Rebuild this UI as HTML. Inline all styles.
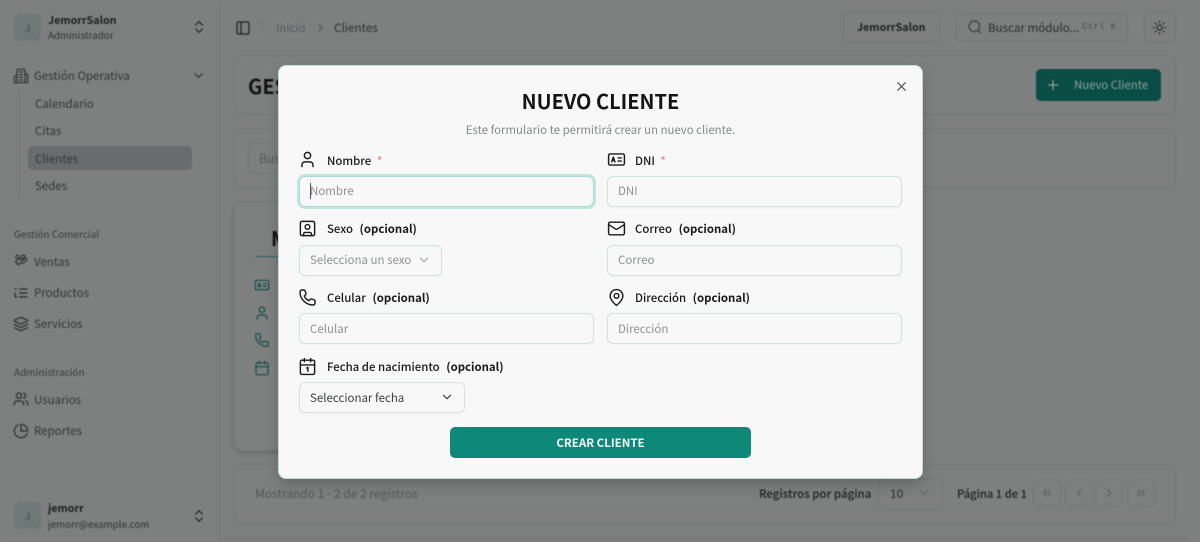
<!DOCTYPE html>
<html lang="es"><head><meta charset="utf-8"><title>Nuevo Cliente</title>
<style>
*{box-sizing:border-box}
html,body{margin:0;padding:0;width:1200px;height:542px;overflow:hidden;background:#7e7f7f}
body{font-family:"Noto Sans CJK SC","Liberation Sans",sans-serif;position:relative}
#bg{position:absolute;inset:0;filter:blur(.45px);background:#7e7f7f}
.t{position:absolute;white-space:nowrap;line-height:20px;height:20px}
.b{position:absolute;border:1px solid #6f7978;border-radius:8px}
svg{position:absolute;fill:none;stroke:currentColor;stroke-width:1.800;stroke-linecap:round;stroke-linejoin:round}
.s{font-size:11.500px;color:#333737}
.g{font-size:10px;color:#383c3c}
.av{position:absolute;left:14px;width:27px;height:27px;border-radius:7px;background:#6f7878;color:#3f4545;font-size:10px;text-align:center;line-height:27px}
#m{position:absolute;left:278px;top:65px;width:645px;height:414px;background:#f8f8f8;border:1px solid #bcdcd6;border-radius:8px;box-shadow:0 6px 14px rgba(0,0,0,.18);color:#1a1a1a}
.l{font-size:11.400px;font-weight:500;color:#191919}
.l b{font-weight:700;margin-left:4px}
.l i{font-style:normal;color:#fb7f86;margin-left:3px}
.i{position:absolute;height:30.500px;border:1px solid #cfe4df;border-radius:6px;box-shadow:0 1px 2px rgba(0,0,0,.04);font-size:11.500px;color:#8f9392;line-height:29px;padding-left:10px;white-space:nowrap}
.i.u{line-height:30px}
</style></head><body>
<div id="bg">
<div style="position:absolute;left:219px;top:0;width:1px;height:542px;background:#6f7978"></div>
<div style="position:absolute;left:220px;top:538px;width:968px;height:1px;background:#727a79"></div>

<div class="av" style="top:14px">J</div>
<div class="t" style="left:48px;top:11px;font-size:10.700px;font-weight:700;color:#1d1f1f">JemorrSalon</div>
<div class="t" style="left:48px;top:25px;font-size:9.800px;color:#2e3232">Administrador</div>
<svg style="left:191px;top:19px;color:#222" width="16" height="16" viewBox="0 0 24 24"><path d="m7 15 5 5 5-5M7 9l5-5 5 5"/></svg>

<svg style="left:13px;top:68px;color:#2d3131" width="16" height="16" viewBox="0 0 24 24" stroke-width="1.700"><rect x="6" y="2" width="12" height="20" rx="2"/><path d="M6 12H4a2 2 0 0 0-2 2v6a2 2 0 0 0 2 2h2M18 9h2a2 2 0 0 1 2 2v9a2 2 0 0 1-2 2h-2M10 6h4M10 10h4M10 14h4M10 18h4"/></svg>
<div class="t s" style="left:34px;top:66px">Gestión Operativa</div>
<svg style="left:191px;top:68px;color:#2a2d2d" width="15" height="15" viewBox="0 0 24 24"><path d="m6 9 6 6 6-6"/></svg>
<div style="position:absolute;left:19px;top:89px;width:1px;height:110px;background:#6f7978"></div>
<div class="t s" style="left:35px;top:94px">Calendario</div>
<div class="t s" style="left:35px;top:121px">Citas</div>
<div style="position:absolute;left:28px;top:146px;width:164px;height:24px;border-radius:5px;background:#686c6c"></div>
<div class="t s" style="left:35px;top:149px">Clientes</div>
<div class="t s" style="left:35px;top:176px">Sedes</div>

<div class="t g" style="left:14px;top:224px">Gestión Comercial</div>
<svg style="left:14px;top:254px;color:#2a2d2d" width="14" height="14" viewBox="0 0 24 24"><path d="M11 12h2a2 2 0 1 0 0-4h-3c-.6 0-1.100.2-1.400.6L3 14"/><path d="m7 18 1.600-1.400c.3-.4.8-.6 1.400-.6h4c1.100 0 2.100-.4 2.800-1.200l4.600-4.400a2 2 0 0 0-2.750-2.910l-4.200 3.900"/><path d="m2 13 6 6"/><circle cx="16" cy="5" r="3"/><circle cx="6" cy="5" r="3"/></svg>
<div class="t s" style="left:34px;top:252px">Ventas</div>
<svg style="left:13px;top:285px;color:#2a2d2d" width="16" height="16" viewBox="0 0 24 24"><path d="M10 6h11M10 12h11M10 18h11M3 6h2M3 12v4a2 2 0 0 0 2 2h1"/></svg>
<div class="t s" style="left:34px;top:283px">Productos</div>
<svg style="left:13px;top:316px;color:#2a2d2d" width="16" height="16" viewBox="0 0 24 24"><path d="m12.800 2.200a2 2 0 0 0-1.600 0L2.600 6.100a1 1 0 0 0 0 1.800l8.600 3.900a2 2 0 0 0 1.600 0l8.600-3.900a1 1 0 0 0 0-1.800z"/><path d="m22 17.600-9.200 4.200a2 2 0 0 1-1.600 0L2 17.600M22 12.600l-9.200 4.200a2 2 0 0 1-1.600 0L2 12.600"/></svg>
<div class="t s" style="left:34px;top:314px">Servicios</div>

<div class="t g" style="left:14px;top:362px">Administración</div>
<svg style="left:13px;top:391px;color:#2a2d2d" width="16" height="16" viewBox="0 0 24 24"><path d="M16 21v-2a4 4 0 0 0-4-4H6a4 4 0 0 0-4 4v2"/><circle cx="9" cy="7" r="4"/><path d="M22 21v-2a4 4 0 0 0-3-3.870M16 3.130a4 4 0 0 1 0 7.750"/></svg>
<div class="t s" style="left:34px;top:390px">Usuarios</div>
<svg style="left:13px;top:423px;color:#2a2d2d" width="16" height="16" viewBox="0 0 24 24"><path d="M21.210 15.890A10 10 0 1 1 8 2.830"/><path d="M22 12A10 10 0 0 0 12 2v10z"/></svg>
<div class="t s" style="left:34px;top:421px">Reportes</div>

<div class="av" style="top:502px">J</div>
<div class="t" style="left:48px;top:499px;font-size:10.700px;font-weight:700;color:#1d1f1f">jemorr</div>
<div class="t" style="left:48px;top:514px;font-size:9.800px;color:#2e3232">jemorr@example.com</div>
<svg style="left:191px;top:508px;color:#222" width="16" height="16" viewBox="0 0 24 24"><path d="m7 15 5 5 5-5M7 9l5-5 5 5"/></svg>

<svg style="left:235px;top:20px;color:#1f2222" width="16" height="16" viewBox="0 0 24 24"><rect x="3" y="3" width="18" height="18" rx="2"/><path d="M9 3v18"/></svg>
<div style="position:absolute;left:261px;top:20px;width:1px;height:14px;background:#6f7978"></div>
<div class="t" style="left:276px;top:18px;font-size:11.500px;color:#575c5e">Inicio</div>
<svg style="left:314px;top:21px;color:#4d5152" width="13" height="13" viewBox="0 0 24 24"><path d="m9 18 6-6-6-6"/></svg>
<div class="t" style="left:334px;top:18px;font-size:11.700px;color:#2d3030">Clientes</div>

<div class="b" style="left:843px;top:12px;width:97px;height:31px;border-radius:6px"></div>
<div class="t" style="left:857px;top:18px;font-size:10.700px;font-weight:700;color:#202222">JemorrSalon</div>
<div class="b" style="left:956px;top:13px;width:172px;height:29px;border-radius:6px"></div>
<svg style="left:967px;top:19px;color:#3c4040" width="16" height="16" viewBox="0 0 24 24" stroke-width="1.600"><circle cx="11" cy="11" r="8"/><path d="m21 21-4.300-4.300"/></svg>
<div class="t" style="left:988px;top:18px;font-size:11.600px;color:#2a2d2d">Buscar módulo...</div>
<div class="t" style="left:1082px;top:17px;font-size:9.500px;font-family:'Liberation Mono',monospace;color:#4a4e4e">Ctrl K</div>
<div class="b" style="left:1144px;top:12px;width:32px;height:31px;border-radius:6px"></div>
<svg style="left:1152px;top:20px;color:#222" width="15" height="15" viewBox="0 0 24 24"><circle cx="12" cy="12" r="4"/><path d="M12 2v2M12 20v2M4.930 4.930l1.410 1.410M17.660 17.660l1.410 1.410M2 12h2M20 12h2M6.340 17.660l-1.410 1.410M19.070 4.930l-1.410 1.410"/></svg>

<div class="b" style="left:234px;top:55px;width:942px;height:60px"></div>
<div class="t" style="left:248px;top:74px;font-size:20px;font-weight:700;color:#111;line-height:24px;height:24px">GESTIÓN</div>
<div style="position:absolute;left:1036px;top:69px;width:125px;height:32px;border-radius:5px;background:#0a4d44"></div>
<svg style="left:1045px;top:77px;color:#8ea5a0" width="16" height="16" viewBox="0 0 24 24"><path d="M5 12h14M12 5v14"/></svg>
<div class="t" style="left:1074px;top:75px;font-size:11.400px;color:#8ca29d">Nuevo Cliente</div>

<div class="b" style="left:234px;top:128px;width:942px;height:60px"></div>
<div class="b" style="left:248px;top:143px;width:200px;height:31px;border-radius:6px"></div>
<div class="t" style="left:259px;top:149px;font-size:12px;color:#565a5a">Buscar</div>

<div class="b" style="left:234px;top:202px;width:400px;height:249px;box-shadow:0 2px 5px rgba(0,0,0,.18)"></div>
<div class="t" style="left:271px;top:226px;font-size:20px;font-weight:700;color:#111;line-height:24px;height:24px">M</div>
<div style="position:absolute;left:255px;top:256px;width:60px;height:1px;background:#2b5f63"></div>
<svg style="left:254px;top:277px;color:#0e4f4a" width="16" height="16" viewBox="0 0 24 24"><rect x="2" y="5" width="20" height="14" rx="2"/><path d="M6 15l2-6 2 6M7 13h2M14 10h4M14 14h4"/></svg>
<svg style="left:254px;top:305px;color:#0e4f4a" width="16" height="16" viewBox="0 0 24 24"><path d="M19 21v-2a4 4 0 0 0-4-4H9a4 4 0 0 0-4 4v2"/><circle cx="12" cy="7" r="4"/></svg>
<svg style="left:254px;top:332px;color:#0e4f4a" width="16" height="16" viewBox="0 0 24 24"><path d="M5 2.500h2.500a1.500 1.500 0 0 1 1.400 1l1.100 3.200a2 2 0 0 1-.6 2L8 10c1 2.800 3.200 5 6 6l1.300-1.500a2 2 0 0 1 2-.6l3.200 1.100a1.500 1.500 0 0 1 1 1.400V19a2.500 2.500 0 0 1-2.500 2.500C10 21.500 2.500 14 2.500 5A2.500 2.500 0 0 1 5 2.500z"/></svg>
<svg style="left:254px;top:360px;color:#0e4f4a" width="16" height="16" viewBox="0 0 24 24"><rect x="3" y="4" width="18" height="18" rx="2"/><path d="M16 2v4M8 2v4M3 10h18"/></svg>

<div class="b" style="left:234px;top:464px;width:942px;height:60px"></div>
<div class="t" style="left:255px;top:484px;font-size:12px;color:#545858">Mostrando 1 - 2 de 2 registros</div>
<div class="t" style="left:759px;top:484px;font-size:11.500px;font-weight:500;color:#202222">Registros por página</div>
<div class="b" style="left:878px;top:478px;width:65px;height:32px;border-radius:6px"></div>
<div class="t" style="left:890px;top:484px;font-size:12px;color:#2a2d2d">10</div>
<svg style="left:917px;top:485px;color:#626666" width="15" height="15" viewBox="0 0 24 24"><path d="m6 9 6 6 6-6"/></svg>
<div class="t" style="left:957px;top:484px;font-size:11.200px;font-weight:500;color:#202222">Página 1 de 1</div>
<div class="b" style="left:1033px;top:479px;width:28px;height:28px;border-radius:6px;border-color:#737b7a"></div>
<div class="b" style="left:1065px;top:479px;width:28px;height:28px;border-radius:6px;border-color:#737b7a"></div>
<div class="b" style="left:1095px;top:479px;width:28px;height:28px;border-radius:6px;border-color:#737b7a"></div>
<div class="b" style="left:1127px;top:479px;width:28px;height:28px;border-radius:6px;border-color:#737b7a"></div>
<svg style="left:1040px;top:486px;color:#585c5c" width="14" height="14" viewBox="0 0 24 24"><path d="m11 17-5-5 5-5M18 17l-5-5 5-5"/></svg>
<svg style="left:1072px;top:486px;color:#585c5c" width="14" height="14" viewBox="0 0 24 24"><path d="m15 18-6-6 6-6"/></svg>
<svg style="left:1102px;top:486px;color:#585c5c" width="14" height="14" viewBox="0 0 24 24"><path d="m9 18 6-6-6-6"/></svg>
<svg style="left:1134px;top:486px;color:#585c5c" width="14" height="14" viewBox="0 0 24 24"><path d="m6 17 5-5-5-5M13 17l5-5-5-5"/></svg>
</div>

<div id="m">
<svg style="left:615px;top:13px;color:#444" width="15" height="15" viewBox="0 0 24 24" stroke-width="1.500"><path d="M18 6 6 18M6 6l12 12"/></svg>
<div class="t" style="left:0;width:643px;text-align:center;top:20px;height:30px;line-height:30px;font-size:20px;font-weight:700;color:#141414">NUEVO CLIENTE</div>
<div class="t" style="left:0;width:643px;text-align:center;top:54px;font-size:11.400px;color:#868a8a">Este formulario te permitirá crear un nuevo cliente.</div>

<svg style="left:19px;top:84px;color:#1a1a1a" width="19" height="19" viewBox="0 0 24 24"><path d="M19 21v-2a4 4 0 0 0-4-4H9a4 4 0 0 0-4 4v2"/><circle cx="12" cy="7" r="4"/></svg>
<div class="t l" style="left:48px;top:85px">Nombre <i>*</i></div>
<div class="i" style="left:20px;top:110px;width:295px;border:1px solid #a9d9d2;box-shadow:0 0 0 2px #bfe6e0">Nombre</div>
<div style="position:absolute;left:31px;top:117px;width:1px;height:16px;background:#555"></div>

<svg style="left:328px;top:84px;color:#1a1a1a" width="19" height="19" viewBox="0 0 24 24"><rect x="2" y="5" width="20" height="14" rx="2"/><path d="M6 15l2-6 2 6M7 13h2M14 10h4M14 14h4"/></svg>
<div class="t l" style="left:356px;top:85px">DNI <i>*</i></div>
<div class="i" style="left:328px;top:110px;width:295px">DNI</div>

<svg style="left:19px;top:153px;color:#1a1a1a" width="19" height="19" viewBox="0 0 24 24"><rect x="3" y="3" width="18" height="18" rx="2"/><circle cx="12" cy="10" r="3"/><path d="M7 21v-2a2 2 0 0 1 2-2h6a2 2 0 0 1 2 2v2"/></svg>
<div class="t l" style="left:48px;top:153px">Sexo <b>(opcional)</b></div>
<div class="i" style="left:20px;top:179px;width:143px">Selecciona un sexo</div>
<svg style="left:138px;top:187px;color:#9a9e9d" width="14" height="14" viewBox="0 0 24 24"><path d="m6 9 6 6 6-6"/></svg>

<svg style="left:328px;top:153px;color:#1a1a1a" width="19" height="19" viewBox="0 0 24 24"><rect x="2" y="4" width="20" height="16" rx="2"/><path d="m22 7-8.970 5.700a1.940 1.940 0 0 1-2.060 0L2 7"/></svg>
<div class="t l" style="left:356px;top:153px">Correo <b>(opcional)</b></div>
<div class="i" style="left:328px;top:179px;width:295px">Correo</div>

<svg style="left:19px;top:222px;color:#1a1a1a" width="19" height="19" viewBox="0 0 24 24"><path d="M5 2.500h2.500a1.500 1.500 0 0 1 1.400 1l1.100 3.200a2 2 0 0 1-.6 2L8 10c1 2.800 3.200 5 6 6l1.300-1.500a2 2 0 0 1 2-.6l3.200 1.100a1.500 1.500 0 0 1 1 1.400V19a2.500 2.500 0 0 1-2.500 2.500C10 21.500 2.500 14 2.500 5A2.500 2.500 0 0 1 5 2.500z"/></svg>
<div class="t l" style="left:48px;top:222px">Celular <b>(opcional)</b></div>
<div class="i u" style="left:20px;top:247px;width:295px">Celular</div>

<svg style="left:328px;top:222px;color:#1a1a1a" width="19" height="19" viewBox="0 0 24 24"><path d="M20 10c0 6-8 12-8 12s-8-6-8-12a8 8 0 0 1 16 0Z"/><circle cx="12" cy="10" r="3"/></svg>
<div class="t l" style="left:356px;top:222px">Dirección <b>(opcional)</b></div>
<div class="i u" style="left:328px;top:247px;width:295px">Dirección</div>

<svg style="left:19px;top:291px;color:#1a1a1a" width="19" height="19" viewBox="0 0 24 24"><rect x="3" y="4" width="18" height="18" rx="2"/><path d="M16 2v4M8 2v4M3 10h18M11 14l1.500-1v5"/></svg>
<div class="t l" style="left:48px;top:291px">Fecha de nacimiento <b>(opcional)</b></div>
<div class="i u" style="left:20px;top:316px;width:166px;color:#3c3f3f">Seleccionar fecha</div>
<svg style="left:161px;top:324px;color:#222" width="14" height="14" viewBox="0 0 24 24" stroke-width="2"><path d="m6 9 6 6 6-6"/></svg>

<div style="position:absolute;left:171px;top:361px;width:301px;height:31px;border-radius:5px;background:#0e8878;color:#f4f8f7;font-size:11.500px;font-weight:700;text-align:center;line-height:32px">CREAR CLIENTE</div>
</div>
</body></html>
